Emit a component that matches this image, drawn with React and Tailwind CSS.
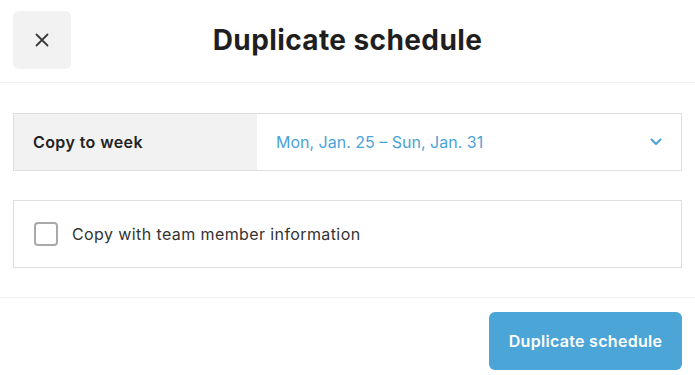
import React from "react";

const App = () => {
  return (
    <div
      className="w-[695px] h-[375px] bg-white text-[#1f1f1f]"
      style={{ fontFamily: "Inter, 'Liberation Sans', sans-serif" }}
    >
      {/* Header */}
      <div className="grid grid-cols-[58px_1fr_58px] items-center h-[83px] px-[13px] pb-[2px] border-b border-[#f0f0f0]">
        <button className="w-[58px] h-[58px] rounded-[6px] bg-[#f2f2f2] flex items-center justify-center">
          <svg width="14" height="14" viewBox="0 0 14 14" fill="none" stroke="#3a3a3a" strokeWidth="1.8" strokeLinecap="round">
            <path d="M1.5 1.5 L12.5 12.5 M12.5 1.5 L1.5 12.5" />
          </svg>
        </button>
        <h1 className="text-center text-[28px] font-bold tracking-[0.4px]">Duplicate schedule</h1>
        <div />
      </div>

      {/* Body */}
      <div className="px-[13px] pt-[30px] pb-[29px] border-b border-[#f0f0f0]">
        <div className="flex h-[58px] border border-[#dedede]">
          <div className="w-[243px] bg-[#f2f2f2] flex items-center pl-[19px] text-[16px] font-semibold tracking-[0.4px] text-[#222]">
            Copy to week
          </div>
          <div className="flex-1 flex items-center justify-between pl-[19px] pr-[19px] text-[16px] text-[#4ba3d8]">
            <span>Mon, Jan. 25 – Sun, Jan. 31</span>
            <svg width="12" height="8" viewBox="0 0 12 8" fill="none" stroke="#4ba3d8" strokeWidth="2" strokeLinecap="round" strokeLinejoin="round">
              <path d="M1.5 1.5 L6 6 L10.5 1.5" />
            </svg>
          </div>
        </div>

        <label className="mt-[29px] flex items-center h-[68px] border border-[#dedede] pl-[20px] gap-[14px]">
          <span className="w-[24px] h-[24px] rounded-[4px] border-2 border-[#a9a9a9] bg-white" />
          <span className="text-[16px] tracking-[0.4px] text-[#333]">Copy with team member information</span>
        </label>
      </div>

      {/* Footer */}
      <div className="flex justify-end px-[13px] pt-[14px]">
        <button className="w-[193px] h-[58px] rounded-[6px] bg-[#4ba5d6] text-white text-[16px] font-semibold tracking-[0.3px]">
          Duplicate schedule
        </button>
      </div>
    </div>
  );
};

export default App;
